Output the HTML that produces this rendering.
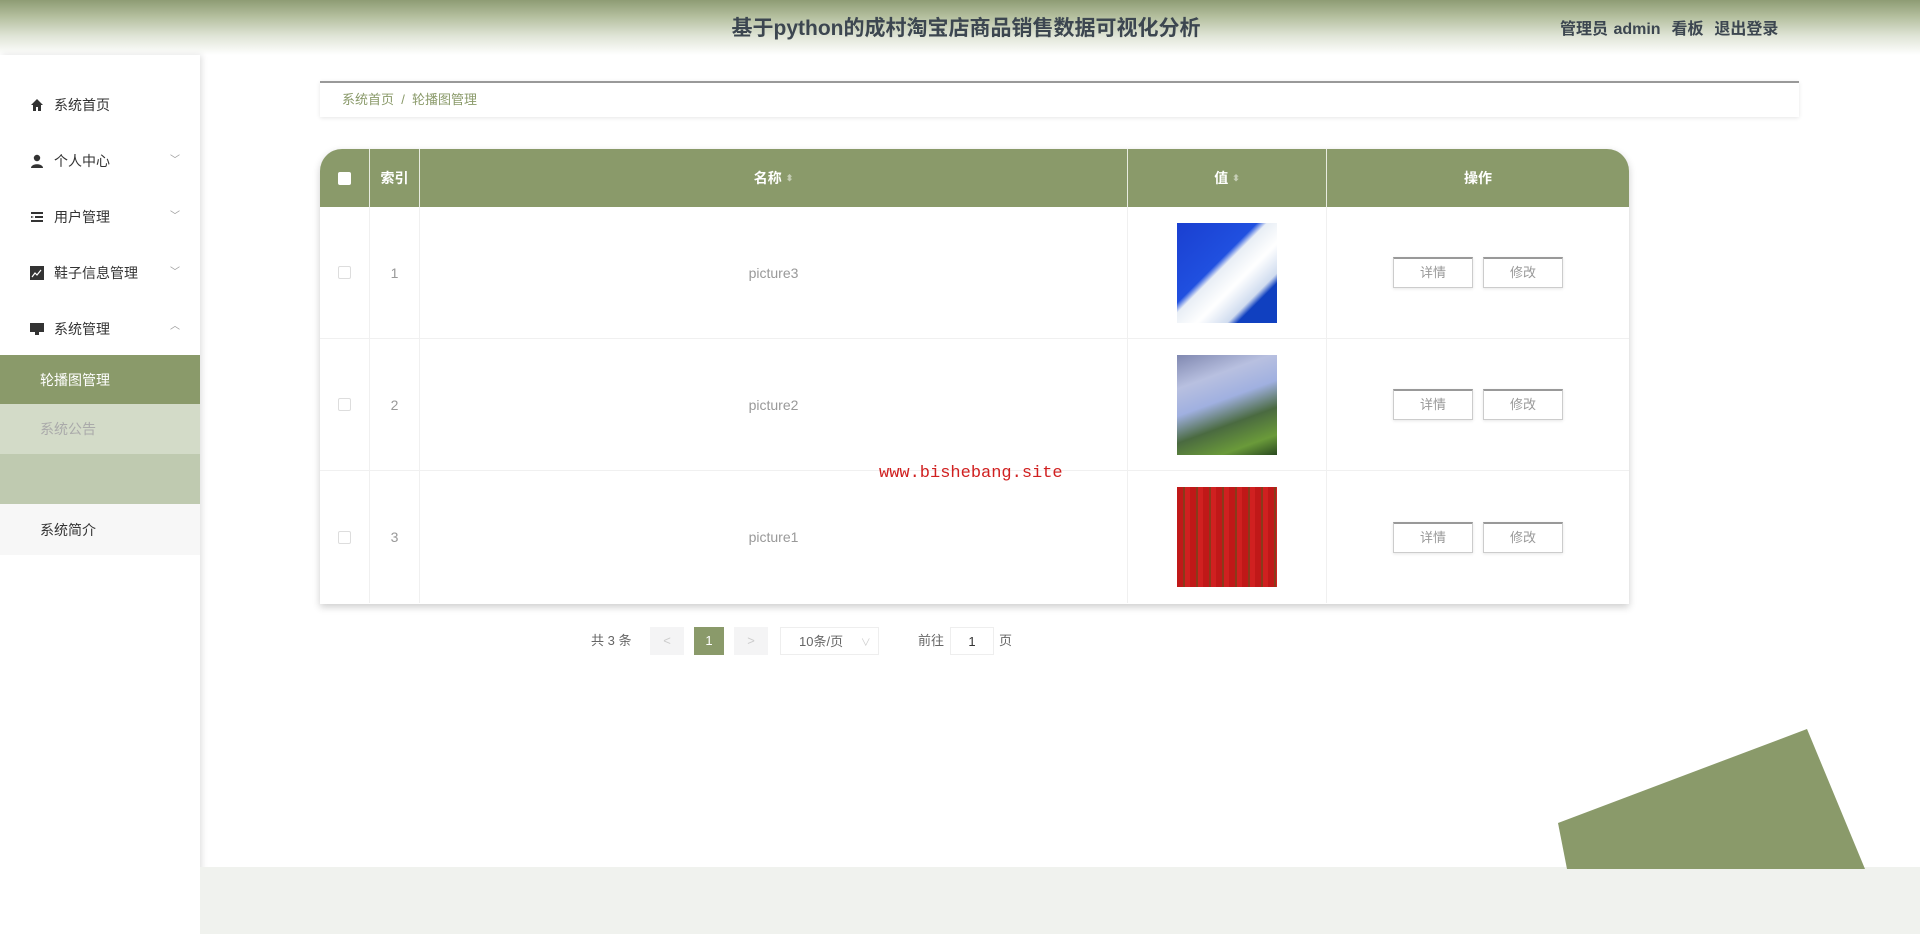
<!DOCTYPE html>
<html><head><meta charset="utf-8"><style>
*{margin:0;padding:0;box-sizing:border-box}
body{width:1920px;height:934px;position:relative;overflow:hidden;background:#fff;font-family:"Liberation Sans","Noto Sans CJK SC",sans-serif;color:#333}
.hdr{position:absolute;left:0;top:0;width:1920px;height:55px;background:linear-gradient(#8e9c74 0%,#b4bf9e 30%,#dfe4d6 65%,#fff 100%)}
.title{position:absolute;left:0;width:1932px;top:12px;text-align:center;font-size:21px;font-weight:bold;color:#3c4650}
.right{position:absolute;left:1560px;top:15px;font-size:16px;font-weight:bold;color:#3c4650;word-spacing:1px}
.side{position:absolute;left:0;top:55px;width:200px;height:879px;background:#fff;box-shadow:2px 0 6px rgba(0,0,0,.12)}
.mi{position:absolute;left:30px;font-size:14px;color:#333;display:flex;align-items:center}
.arr{position:absolute;left:170px;font-size:10px;color:#999}
.sub{position:absolute;left:0;width:200px;font-size:14px;padding-left:40px;display:flex;align-items:center}
.bc{position:absolute;left:320px;top:81px;width:1479px;height:36px;border-top:2px solid #999;box-shadow:0 1px 4px rgba(0,0,0,.1);font-size:13px;color:#8a9a6a;padding:6px 0 0 22px}
.tbl{position:absolute;left:320px;top:149px;width:1309px;height:455px;box-shadow:0 3px 8px rgba(0,0,0,.2);border-radius:22px 22px 0 0;overflow:hidden;background:#fff}
.th{position:absolute;top:0;height:58px;background:#8a9a6a;color:#fff;font-size:14px;font-weight:bold;display:flex;align-items:center;justify-content:center;border-right:1px solid #e8ece0}
.td{position:absolute;height:132px;border-right:1px solid #f0f0f0;border-bottom:1px solid #f0f0f0;display:flex;align-items:center;justify-content:center;font-size:14px;color:#999}
.cb{width:13px;height:13px;border:1px solid #ddd;border-radius:2px}
.btn{display:inline-block;width:80px;height:31px;border:1px solid #ccc;border-top:2px solid #999;font-size:13px;color:#999;text-align:center;line-height:28px;margin:0 5px;box-shadow:0 1px 3px rgba(0,0,0,.1)}
.pg{position:absolute;top:627px;font-size:13px;color:#666;height:28px;line-height:28px}
</style></head><body>
<div class="hdr"><div class="title">基于python的成村淘宝店商品销售数据可视化分析</div><div class="right">管理员 admin&nbsp; 看板&nbsp; 退出登录</div></div>
<div class="side">
<div class="mi" style="top:40px"><svg width="14" height="14" style="margin-right:10px"><path d="M7 1L1 7h2v6h3V9h2v4h3V7h2z" fill="#333"/></svg>系统首页</div>
<div class="mi" style="top:96px"><svg width="14" height="14" style="margin-right:10px"><circle cx="7" cy="4" r="3.2" fill="#333"/><path d="M1 14c0-5 12-5 12 0z" fill="#333"/></svg>个人中心</div><div class="arr" style="top:96px">﹀</div>
<div class="mi" style="top:152px"><svg width="14" height="14" style="margin-right:10px"><path d="M1 2h12v2H1zM5 6h8v2H5zM1 10h12v2H1zM1 6l3 1-3 1z" fill="#333"/></svg>用户管理</div><div class="arr" style="top:152px">﹀</div>
<div class="mi" style="top:208px"><svg width="14" height="14" style="margin-right:10px"><rect width="14" height="14" fill="#333"/><path d="M2 11l3-4 2 2 4-5" stroke="#fff" fill="none" stroke-width="1.2"/></svg>鞋子信息管理</div><div class="arr" style="top:208px">﹀</div>
<div class="mi" style="top:264px"><svg width="14" height="14" style="margin-right:10px"><rect y="1" width="14" height="9" fill="#333"/><rect x="5" y="10" width="4" height="3" fill="#333"/></svg>系统管理</div><div class="arr" style="top:262px">︿</div>
<div class="sub" style="top:300px;height:49px;background:#8a9a6a;color:#fff">轮播图管理</div>
<div class="sub" style="top:349px;height:50px;background:#d3dbc8;color:#aaa">系统公告</div>
<div class="sub" style="top:399px;height:50px;background:#bfcab0"></div>
<div class="sub" style="top:449px;height:51px;background:#f7f7f7;color:#333">系统简介</div>
</div>
<div class="bc">系统首页 &nbsp;/&nbsp; 轮播图管理</div>
<div class="tbl">
<div class="th" style="left:0;width:50px"><div style="width:13px;height:13px;background:#fff;border-radius:2px"></div></div>
<div class="th" style="left:50px;width:50px">索引</div>
<div class="th" style="left:100px;width:708px">名称 <span style="font-size:9px;color:#c5cdb5;margin-left:4px">⬍</span></div>
<div class="th" style="left:808px;width:199px">值 <span style="font-size:9px;color:#c5cdb5;margin-left:4px">⬍</span></div>
<div class="th" style="left:1007px;width:302px;border:none">操作</div>

<div class="td" style="left:0;top:58px;width:50px"><div class="cb"></div></div>
<div class="td" style="left:50px;top:58px;width:50px">1</div>
<div class="td" style="left:100px;top:58px;width:708px">picture3</div>
<div class="td" style="left:808px;top:58px;width:199px"><div style="width:100px;height:100px;background:linear-gradient(135deg,#1a3fd0 0%,#2050e0 40%,#e8eef5 45%,#fff 60%,#d0dcef 75%,#1040c0 80%)"></div></div>
<div class="td" style="left:1007px;top:58px;width:302px;border-right:none"><span class="btn">详情</span><span class="btn">修改</span></div>

<div class="td" style="left:0;top:190px;width:50px"><div class="cb"></div></div>
<div class="td" style="left:50px;top:190px;width:50px">2</div>
<div class="td" style="left:100px;top:190px;width:708px">picture2</div>
<div class="td" style="left:808px;top:190px;width:199px"><div style="width:100px;height:100px;background:linear-gradient(160deg,#8088b0 0%,#b8c0e0 25%,#a0b0e0 45%,#4a6a40 65%,#6a9a3a 85%,#2a4a20 100%)"></div></div>
<div class="td" style="left:1007px;top:190px;width:302px;border-right:none"><span class="btn">详情</span><span class="btn">修改</span></div>

<div class="td" style="left:0;top:322px;width:50px;border-bottom:none"><div class="cb"></div></div>
<div class="td" style="left:50px;top:322px;width:50px;border-bottom:none">3</div>
<div class="td" style="left:100px;top:322px;width:708px;border-bottom:none">picture1</div>
<div class="td" style="left:808px;top:322px;width:199px;border-bottom:none"><div style="width:100px;height:100px;background:repeating-linear-gradient(90deg,#c01818 0 6px,#8a3a1a 6px 8px,#d02020 8px 13px)"></div></div>
<div class="td" style="left:1007px;top:322px;width:302px;border-right:none;border-bottom:none"><span class="btn">详情</span><span class="btn">修改</span></div>
</div>
<div style="position:absolute;left:879px;top:464px;font-family:'Liberation Mono',monospace;font-size:17px;color:#d02020">www.bishebang.site</div>
<div class="pg" style="left:591px">共 3 条</div>
<div class="pg" style="left:650px;width:34px;background:#f4f4f5;text-align:center;color:#ccc">&lt;</div>
<div class="pg" style="left:694px;width:30px;background:#8a9a6a;text-align:center;color:#fff">1</div>
<div class="pg" style="left:734px;width:34px;background:#f4f4f5;text-align:center;color:#ccc">&gt;</div>
<div class="pg" style="left:780px;width:99px;border:1px solid #eee;padding-left:18px">10条/页 <span style="color:#ccc;font-size:10px;margin-left:14px">∨</span></div>
<div class="pg" style="left:918px">前往</div>
<div class="pg" style="left:950px;width:44px;border:1px solid #eee;text-align:center;color:#333">1</div>
<div class="pg" style="left:999px">页</div>
<div style="position:absolute;left:200px;top:867px;width:1720px;height:67px;background:#f0f2ee"></div>
<svg style="position:absolute;left:0;top:0" width="1920" height="934"><polygon points="1558,823 1807,729 1865,869 1567,869" fill="#8a9a6a"/></svg>
</body></html>
